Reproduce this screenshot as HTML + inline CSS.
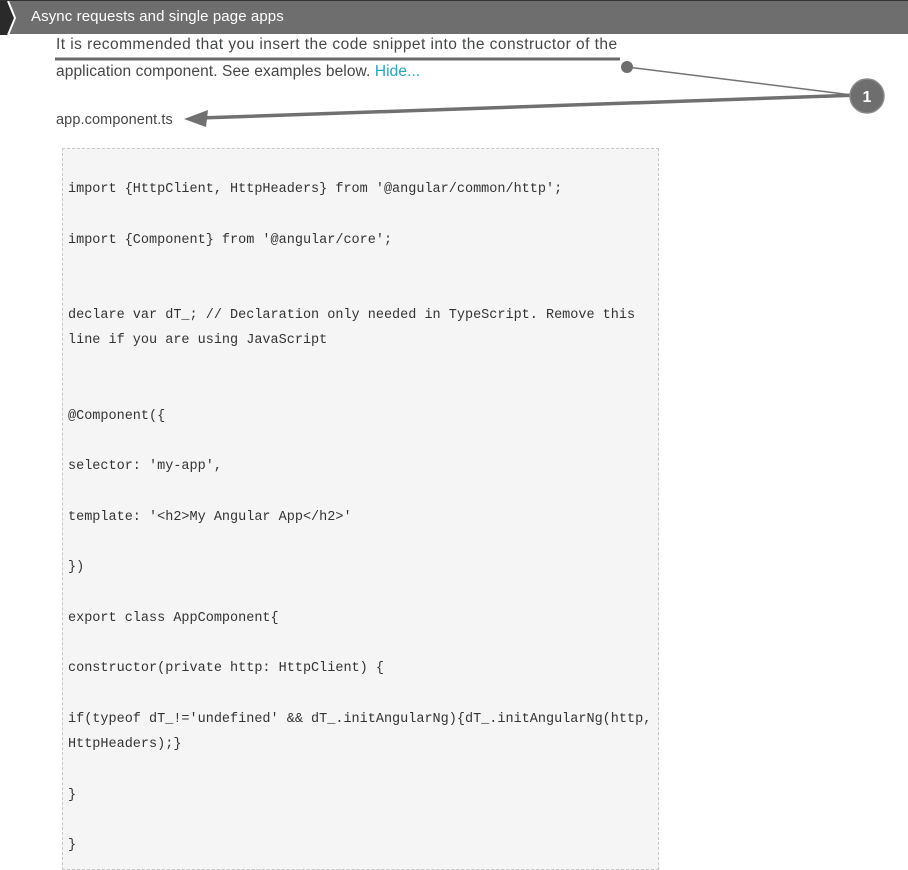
<!DOCTYPE html>
<html><head><meta charset="utf-8"><style>
body{margin:0;width:908px;height:858px;overflow:hidden;background:#fff;position:relative;font-family:"Liberation Sans",sans-serif}
.bar{position:absolute;left:0;top:0;width:908px;height:34px;background:#6e6e6e;border-top:1px solid #333;box-sizing:border-box}
.bar .t{position:absolute;left:31px;top:7px;color:#fff;font-size:15px;letter-spacing:0.1px}
.p{position:absolute;left:56px;color:#454646;font-size:15.5px;letter-spacing:0.45px}
.code{position:absolute;left:62px;top:148px;width:595px;height:720px;background:#f5f5f5;border:1px dashed #c8c8c8;}
.c{position:absolute;left:68px;font-family:"Liberation Mono",monospace;font-size:13.5px;color:#333;white-space:pre;line-height:16px}
</style></head><body>
<div class="bar"><svg width="20" height="34" style="position:absolute;left:0;top:0"><polygon points="0,0 8,0 15,17 8,34 0,34" fill="#2a2a2a"/><polyline points="8,0 15,17 8,34" fill="none" stroke="#fff" stroke-width="2"/></svg><span class="t">Async requests and single page apps</span></div>
<div class="p" style="top:36px">It is recommended that you insert the code snippet into the constructor of the</div>
<div class="p" style="top:63px;letter-spacing:0.1px">application component. See examples below. <span style="color:#1ea7c8">Hide...</span></div>
<div class="p" style="top:112px;font-size:14.5px;letter-spacing:0.1px">app.component.ts</div>
<div class="code"></div>
<div class="c" style="top:182px">import {HttpClient, HttpHeaders} from '@angular/common/http';</div>
<div class="c" style="top:233px">import {Component} from '@angular/core';</div>
<div class="c" style="top:308px">declare var dT_; // Declaration only needed in TypeScript. Remove this</div>
<div class="c" style="top:333px">line if you are using JavaScript</div>
<div class="c" style="top:409px">@Component({</div>
<div class="c" style="top:459px">selector: 'my-app',</div>
<div class="c" style="top:510px">template: '&lt;h2&gt;My Angular App&lt;/h2&gt;'</div>
<div class="c" style="top:560px">})</div>
<div class="c" style="top:611px">export class AppComponent{</div>
<div class="c" style="top:661px">constructor(private http: HttpClient) {</div>
<div class="c" style="top:712px">if(typeof dT_!='undefined' &amp;&amp; dT_.initAngularNg){dT_.initAngularNg(http,</div>
<div class="c" style="top:737px">HttpHeaders);}</div>
<div class="c" style="top:788px">}</div>
<div class="c" style="top:838px">}</div>
<svg width="908" height="858" style="position:absolute;left:0;top:0">
<line x1="55" y1="59" x2="620" y2="59" stroke="#6a6a6a" stroke-width="3"/>
<circle cx="627" cy="67" r="6" fill="#6e6e6e"/>
<line x1="627" y1="67" x2="860" y2="96" stroke="#727272" stroke-width="1.5"/>
<line x1="860" y1="95" x2="200" y2="118" stroke="#707070" stroke-width="3.5"/>
<polygon points="184,119 208,110 206,127" fill="#707070"/>
<circle cx="867" cy="96" r="17" fill="#6e6e6e" stroke="#8a8a8a" stroke-width="1.5"/>
<text x="867" y="102" text-anchor="middle" fill="#fff" font-family="Liberation Sans" font-weight="bold" font-size="16">1</text>
</svg>
</body></html>
